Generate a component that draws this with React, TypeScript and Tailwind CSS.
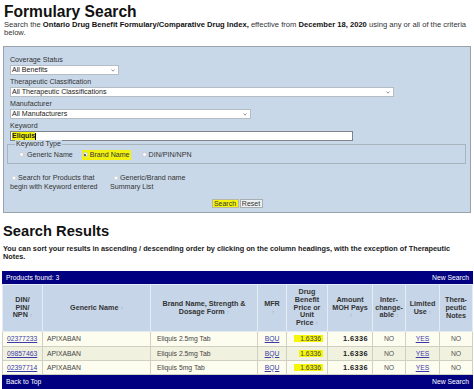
const cols = [40, 108, 107, 29, 41, 45, 33, 34, 33];

type Row = { din: string; brand: string; bg: string; pad: string };

const rows: Row[] = [
  { din: "02377233", brand: "Eliquis 2.5mg Tab", bg: "bg-[#fdfdef]", pad: "pl-[6px]" },
  { din: "09857463", brand: "Eliquis 2.5mg Tab", bg: "bg-[#f1f1e0]", pad: "pl-[1px]" },
  { din: "02397714", brand: "Eliquis 5mg Tab", bg: "bg-[#fdfdef]", pad: "pl-[6px]" },
];

function Sort() {
  return <span className="ml-[2px] text-[5px] font-normal text-[#a3acb6]">↕</span>;
}

function Select({ label, width, value }: { label: string; width: string; value: string }) {
  return (
    <div>
      <div className="h-[8px] leading-[8px] text-[#333]">{label}</div>
      <div
        className={`mt-[1px] flex h-[10px] items-center justify-between border border-[#b4bcc4] bg-white pl-[1px] pr-[3px] leading-[8px] text-[#222] ${width}`}
      >
        <span>{value}</span>
        <svg width="4" height="3" viewBox="0 0 4 3">
          <path d="M0.5 0.5 L2 2.2 L3.5 0.5" stroke="#666" strokeWidth="0.7" fill="none" />
        </svg>
      </div>
    </div>
  );
}

function Radio({ checked }: { checked?: boolean }) {
  return (
    <span className="flex h-[5px] w-[5px] items-center justify-center rounded-full border border-[#c8ccd0] bg-white">
      {checked && <span className="h-[2px] w-[2px] rounded-full bg-[#333]" />}
    </span>
  );
}

function Box() {
  return <span className="mr-[2px] inline-block h-[4px] w-[4px] border border-[#d6dbe0] bg-white align-middle" />;
}

export default function App() {
  return (
    <div className="h-[389px] w-[474px] overflow-hidden bg-white font-['Liberation_Sans',Arial,sans-serif] text-black">
      <h1 className="h-[21px] pl-[4px] text-[15.6px] font-bold leading-[24px] text-[#111]">Formulary Search</h1>
      <p className="whitespace-nowrap pl-[4px] text-[7.6px] leading-[8px] text-[#333]">
        Search the <b className="text-[#111]">Ontario Drug Benefit Formulary/Comparative Drug Index,</b> effective from{" "}
        <b className="text-[#111]">December 18, 2020</b> using any or all of the criteria
        <br />
        below.
      </p>

      <div className="ml-[3px] mt-[9px] h-[167px] w-[468px] border border-[#9aa2aa] bg-[#c9d8e9] pl-[6px] pt-[9px] text-[7.1px]">
        <div className="flex flex-col gap-[3px]">
          <Select label="Coverage Status" width="w-[109px]" value="All Benefits" />
          <Select label="Therapeutic Classification" width="w-[384px]" value="All Therapeutic Classifications" />
          <Select label="Manufacturer" width="w-[241px]" value="All Manufacturers" />
          <div>
            <div className="h-[8px] leading-[8px] text-[#333]">Keyword</div>
            <div className="mt-[1px] flex h-[10px] w-[343px] items-center border border-[#7d858d] bg-white pl-[1px] leading-[8px]">
              <span className="bg-[#f4f40a] font-bold text-[#222]">Eliquis</span>
              <span className="h-[7px] w-px bg-black" />
            </div>
          </div>
        </div>

        <div className="relative -ml-[3px] mt-[3px] flex h-[20px] w-[459px] items-center border border-[#a9b3bd] pl-[11px] pt-[2px] text-[#333]">
          <span className="absolute -top-[5px] left-[7px] bg-[#c9d8e9] px-[1px] leading-[8px]">Keyword Type</span>
          <span className="flex items-center gap-[3px]">
            <Radio />
            Generic Name
          </span>
          <span className="ml-[9px] flex items-center gap-[2px] bg-[#f2f20e] px-[1px]">
            <Radio checked />
            Brand Name
          </span>
          <span className="ml-[11px] flex items-center gap-[2px]">
            <Radio />
            DIN/PIN/NPN
          </span>
        </div>

        <div className="mt-[10px] flex leading-[8.6px] text-[#333]">
          <div className="w-[100px]">
            <span className="ml-[2px]" />
            <Box />
            Search for Products that
            <br />
            begin with Keyword entered
          </div>
          <div>
            <span className="ml-[4px]" />
            <Box />
            Generic/Brand name
            <br />
            Summary List
          </div>
        </div>

        <div className="-ml-[6px] mt-[8px] flex justify-center gap-[1px] text-[7px] leading-[7px]">
          <span className="flex h-[9px] w-[27px] items-center justify-center border border-[#b8b8a0] bg-[#f4f40c] text-[#333]">
            Search
          </span>
          <span className="flex h-[9px] w-[23px] items-center justify-center border border-[#a8adb3] bg-[#eef0f2] text-[#333]">
            Reset
          </span>
        </div>
      </div>

      <h2 className="ml-[3px] mt-[9px] text-[14.7px] font-bold leading-[18px] text-[#111]">Search Results</h2>
      <p className="ml-[3px] mt-[5px] whitespace-nowrap text-[7.3px] font-bold leading-[8px] text-[#222]">
        You can sort your results in ascending / descending order by clicking on the column headings, with the exception of Therapeutic
        <br />
        Notes.
      </p>

      <table className="ml-[2px] mt-[10px] w-[470px] table-fixed border-collapse border border-[#000080] text-[6.8px]">
        <colgroup>
          {cols.map((w, i) => (
            <col key={i} style={{ width: w }} />
          ))}
        </colgroup>
        <tbody>
          <tr className="h-[13px] bg-[#000080] text-white">
            <td colSpan={9} className="px-[3px] leading-[8px]">
              <div className="flex justify-between">
                <span>Products found: 3</span>
                <span>New Search</span>
              </div>
            </td>
          </tr>
          <tr className="h-[47px] bg-[#c6d6e8] text-center align-middle text-[7.2px] font-bold leading-[7.8px] text-[#333]">
            <td className="border border-[#e4ebf2]">
              DIN/
              <br />
              PIN/
              <br />
              NPN
              <Sort />
            </td>
            <td className="border border-[#e4ebf2]">
              Generic Name
              <Sort />
            </td>
            <td className="border border-[#e4ebf2]">
              Brand Name, Strength &amp;
              <br />
              Dosage Form
              <Sort />
            </td>
            <td className="border border-[#e4ebf2]">
              MFR
              <br />
              <Sort />
            </td>
            <td className="border border-[#e4ebf2]">
              Drug
              <br />
              Benefit
              <br />
              Price or
              <br />
              Unit
              <br />
              Price
              <Sort />
            </td>
            <td className="border border-[#e4ebf2]">
              Amount
              <br />
              MOH Pays
              <br />
              <Sort />
            </td>
            <td className="border border-[#e4ebf2]">
              Inter-
              <br />
              change-
              <br />
              able
              <Sort />
            </td>
            <td className="border border-[#e4ebf2]">
              Limited
              <br />
              Use
              <Sort />
            </td>
            <td className="border border-[#e4ebf2]">
              Thera-
              <br />
              peutic
              <br />
              Notes
            </td>
          </tr>
          {rows.map((r, i) => (
            <tr key={r.din} className={`${i === 0 ? "h-[15px]" : "h-[14px]"} ${r.bg} leading-[8px] text-[#444]`}>
              <td className="border border-[#cfcfc2] pl-[4px]">
                <span className="text-[#3b3ba8] underline">{r.din}</span>
              </td>
              <td className="border border-[#cfcfc2] pl-[4px]">APIXABAN</td>
              <td className="border border-[#cfcfc2] pl-[6px]">{r.brand}</td>
              <td className="border border-[#cfcfc2] text-center">
                <span className="text-[#3b3ba8] underline">BQU</span>
              </td>
              <td className="border border-[#cfcfc2] pr-[4px] text-right">
                <span className={`bg-[#f6f60a] pr-[2px] ${r.pad}`}>1.6336</span>
              </td>
              <td className="border border-[#cfcfc2] pr-[4px] text-right text-[7.4px] font-bold tracking-[0.4px] text-[#222]">
                1.6336
              </td>
              <td className="border border-[#cfcfc2] text-center text-[#555]">NO</td>
              <td className="border border-[#cfcfc2] text-center">
                <span className="text-[#3b3ba8] underline">YES</span>
              </td>
              <td className="border border-[#cfcfc2] text-center text-[#555]">NO</td>
            </tr>
          ))}
          <tr className="h-[14px] bg-[#000080] text-white">
            <td colSpan={9} className="px-[3px] leading-[8px]">
              <div className="flex justify-between">
                <span>Back to Top</span>
                <span>New Search</span>
              </div>
            </td>
          </tr>
        </tbody>
      </table>
    </div>
  );
}
